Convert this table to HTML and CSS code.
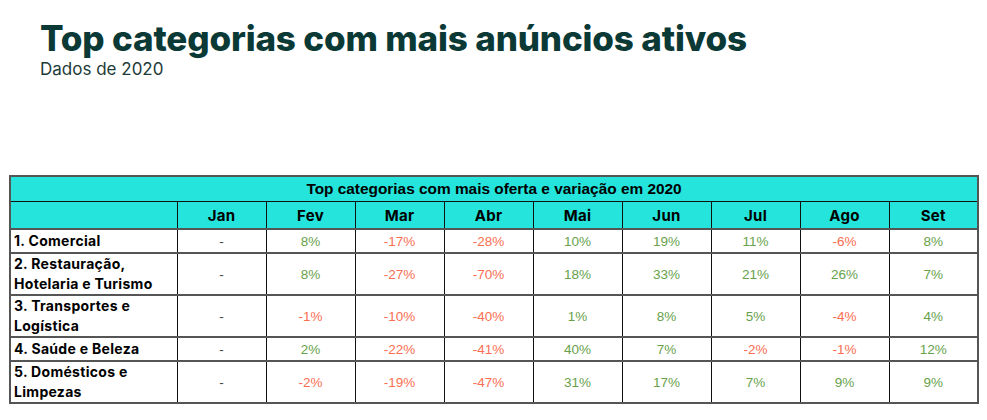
FILE: index.html
```html
<!DOCTYPE html>
<html lang="pt">
<head>
<meta charset="utf-8">
<title>Top categorias com mais anúncios ativos</title>
<link rel="stylesheet" href="styles.css">
</head>
<body>
<header class="head">
  <h1 class="title">Top categorias com mais anúncios ativos</h1>
  <p class="subtitle">Dados de 2020</p>
</header>
<table class="grid">
  <colgroup>
    <col class="c-label">
    <col span="9" class="c-month">
  </colgroup>
  <thead>
    <tr class="r-caption"><th colspan="10" class="caption">Top categorias com mais oferta e variação em 2020</th></tr>
    <tr class="r-months">
      <th></th><th>Jan</th><th>Fev</th><th>Mar</th><th>Abr</th><th>Mai</th><th>Jun</th><th>Jul</th><th>Ago</th><th>Set</th>
    </tr>
  </thead>
  <tbody>
    <tr class="r-1">
      <td class="label">1. Comercial</td>
      <td>-</td><td class="pos">8%</td><td class="neg">-17%</td><td class="neg">-28%</td><td class="pos">10%</td><td class="pos">19%</td><td class="pos">11%</td><td class="neg">-6%</td><td class="pos">8%</td>
    </tr>
    <tr class="r-2">
      <td class="label">2. Restauração,<br>Hotelaria e Turismo</td>
      <td>-</td><td class="pos">8%</td><td class="neg">-27%</td><td class="neg">-70%</td><td class="pos">18%</td><td class="pos">33%</td><td class="pos">21%</td><td class="pos">26%</td><td class="pos">7%</td>
    </tr>
    <tr class="r-2">
      <td class="label">3. Transportes e<br>Logística</td>
      <td>-</td><td class="neg">-1%</td><td class="neg">-10%</td><td class="neg">-40%</td><td class="pos">1%</td><td class="pos">8%</td><td class="pos">5%</td><td class="neg">-4%</td><td class="pos">4%</td>
    </tr>
    <tr class="r-1">
      <td class="label">4. Saúde e Beleza</td>
      <td>-</td><td class="pos">2%</td><td class="neg">-22%</td><td class="neg">-41%</td><td class="pos">40%</td><td class="pos">7%</td><td class="neg">-2%</td><td class="neg">-1%</td><td class="pos">12%</td>
    </tr>
    <tr class="r-2">
      <td class="label">5. Domésticos e<br>Limpezas</td>
      <td>-</td><td class="neg">-2%</td><td class="neg">-19%</td><td class="neg">-47%</td><td class="pos">31%</td><td class="pos">17%</td><td class="pos">7%</td><td class="pos">9%</td><td class="pos">9%</td>
    </tr>
  </tbody>
</table>
</body>
</html>
```
FILE: styles.css
```css
html, body {
  margin: 0;
  padding: 0;
  background: #ffffff;
}
body {
  font-family: "Liberation Sans", Arial, sans-serif;
  color: #000;
}
.head {
  padding: 17px 0 0 40px;
  height: 159px;
  box-sizing: border-box;
}
.title {
  margin: 0;
  font-family: Inter, "Noto Sans", sans-serif;
  font-weight: 800;
  font-size: 35px;
  line-height: 42px;
  color: #0b3935;
  letter-spacing: -0.15px;
}
.subtitle {
  margin: 0;
  font-family: Inter, "Noto Sans", sans-serif;
  font-weight: 400;
  font-size: 17px;
  line-height: 20px;
  color: #1d3b38;
}
.grid {
  margin-left: 9px;
  margin-top: 16px;
  width: 970px;
  border-collapse: collapse;
  table-layout: fixed;
  border: 2px solid #555;
}
.c-label { width: 167px; }
.c-month { width: 89px; }
.grid th, .grid td {
  border: 1px solid #111;
  padding: 0;
  text-align: center;
  vertical-align: middle;
}
.grid tbody tr { border-top: 2px solid #555; }
.grid thead th {
  background: #24e4dc;
  font-weight: 700;
}
.caption {
  font-family: "Liberation Sans", Arial, sans-serif;
  font-size: 15.4px;
  height: 24px;
  border-bottom: 2px solid #333;
}
.r-months th {
  font-family: Inter, "Noto Sans", sans-serif;
  font-size: 15px;
  letter-spacing: 0.3px;
  height: 26px;
}
.grid td {
  font-family: "Liberation Sans", Arial, sans-serif;
  font-size: 13.5px;
  color: #444;
}
.r-1 td { height: 22px; }
.r-2 td { height: 40px; }
.grid td.label {
  text-align: left;
  padding-left: 3px;
  font-family: Inter, "Noto Sans", sans-serif;
  font-weight: 700;
  font-size: 14px;
  letter-spacing: 0.3px;
  line-height: 20px;
  color: #000;
}
.grid td.pos { color: #67a24b; }
.grid td.neg { color: #fb6e52; }
```
